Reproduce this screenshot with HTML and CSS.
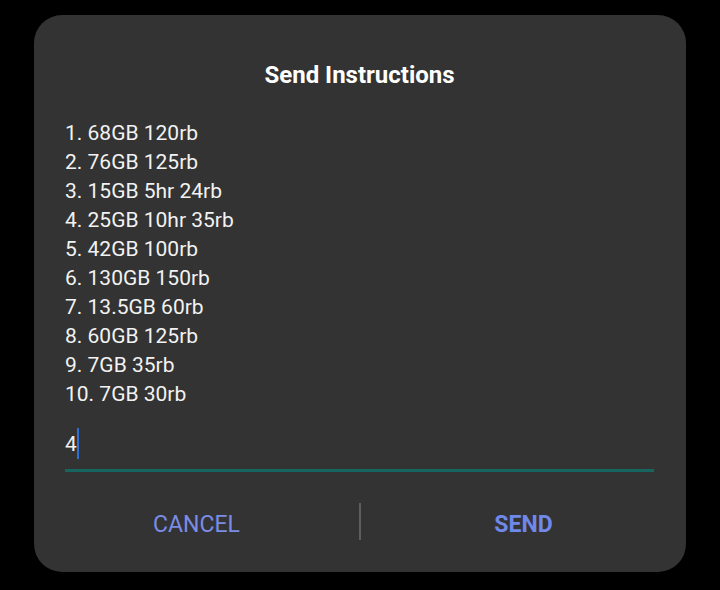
FILE: index.html
```html
<!DOCTYPE html>
<html lang="en">
<head>
    <meta charset="UTF-8">
    <meta name="viewport" content="width=device-width, initial-scale=1.0">
    <title>Send Instructions</title>
    <link rel="stylesheet" href="styles.css">
</head>
<body>
    <div class="dialog">
        <div class="content">
            <h1 class="title">Send Instructions</h1>
            <div class="options">
                <p>1. 68GB 120rb</p>
                <p>2. 76GB 125rb</p>
                <p>3. 15GB 5hr 24rb</p>
                <p>4. 25GB 10hr 35rb</p>
                <p>5. 42GB 100rb</p>
                <p>6. 130GB 150rb</p>
                <p>7. 13.5GB 60rb</p>
                <p>8. 60GB 125rb</p>
                <p>9. 7GB 35rb</p>
                <p>10. 7GB 30rb</p>
            </div>
            <div class="field">
                <span class="field-text">4</span><span class="cursor"></span>
            </div>
        </div>
        <div class="actions">
            <button class="action">CANCEL</button>
            <span class="divider"></span>
            <button class="action primary">SEND</button>
        </div>
    </div>
</body>
</html>
```

FILE: styles.css
```css
body {
    margin: 0;
    padding: 0;
    background: #000;
    font-family: Roboto, "Noto Sans", sans-serif;
}
.dialog {
    margin: 15px 0 0 34px;
    width: 652px;
    padding: 45px 0 32px;
    box-sizing: border-box;
    background: #333333;
    border-radius: 28px;
}
.content { padding: 0 32px 0 31px; }
.title {
    margin: 0;
    text-align: center;
    color: #fff;
    font-size: 24px;
    font-weight: bold;
    line-height: 30px;
}
.options { margin-top: 29px; }
.options p {
    margin: 0;
    color: #f2f2f2;
    font-size: 21px;
    line-height: 29px;
}
.field {
    display: flex;
    align-items: flex-start;
    margin-top: 19px;
    padding-bottom: 10px;
    border-bottom: 3px solid #16665f;
}
.field-text {
    margin-top: 2px;
    color: #f2f2f2;
    font-size: 21px;
    line-height: 29px;
}
.cursor {
    width: 2px;
    height: 31px;
    background: #2f6fd8;
}
.actions {
    display: flex;
    margin-top: 31px;
}
.action {
    flex: 1;
    padding: 6px 0 0;
    border: none;
    background: none;
    color: #7b8ce6;
    font-family: Roboto, "Noto Sans", sans-serif;
    font-size: 23px;
    line-height: 30px;
    text-align: center;
}
.action.primary {
    font-weight: bold;
    color: #7088ea;
}
.divider {
    width: 2px;
    height: 37px;
    background: #5e5e5e;
}
```
